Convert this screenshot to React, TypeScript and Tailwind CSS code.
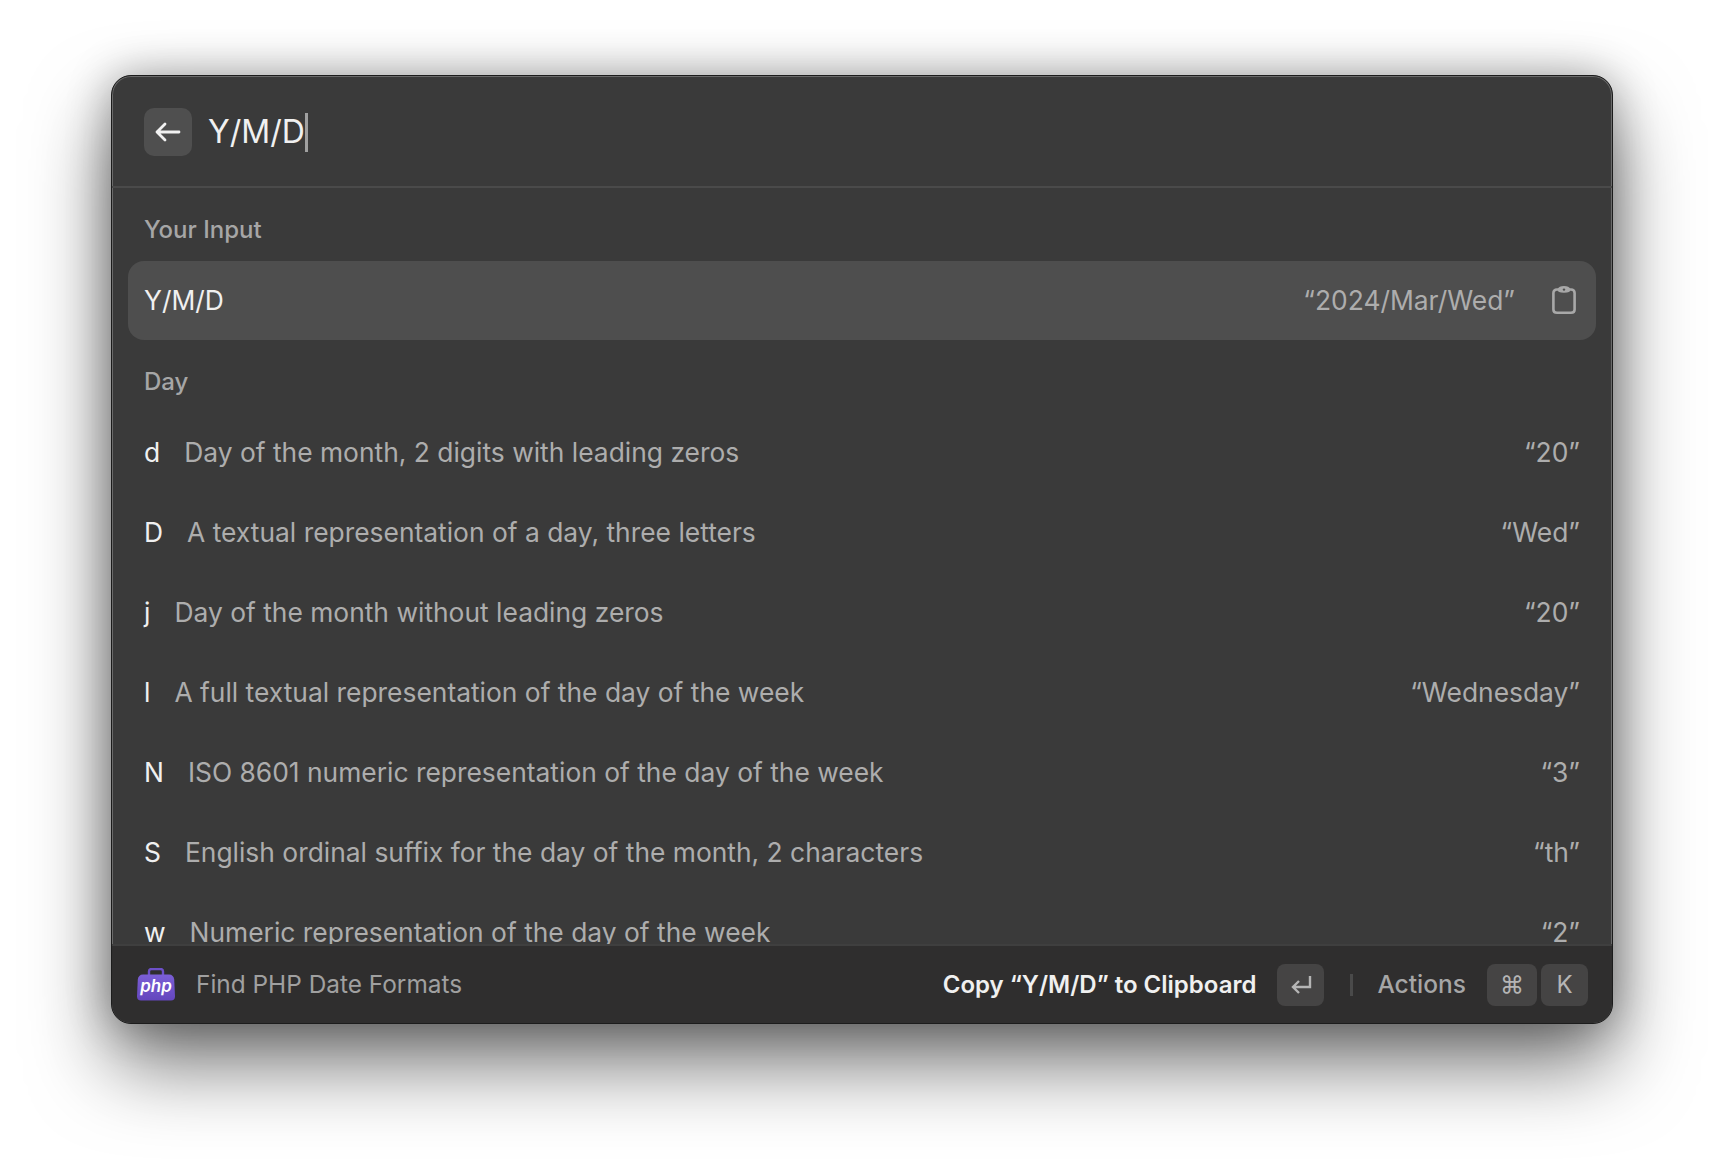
const rows = [
  { key: "d", label: "Day of the month, 2 digits with leading zeros", value: "“20”" },
  { key: "D", label: "A textual representation of a day, three letters", value: "“Wed”" },
  { key: "j", label: "Day of the month without leading zeros", value: "“20”" },
  { key: "l", label: "A full textual representation of the day of the week", value: "“Wednesday”" },
  { key: "N", label: "ISO 8601 numeric representation of the day of the week", value: "“3”" },
  { key: "S", label: "English ordinal suffix for the day of the month, 2 characters", value: "“th”" },
  { key: "w", label: "Numeric representation of the day of the week", value: "“2”" },
];

function PhpIcon() {
  return (
    <svg width="38" height="33" viewBox="0 0 38 33">
      <defs>
        <linearGradient id="php" x1="0" y1="0" x2="0" y2="1">
          <stop offset="0" stopColor="#7b5fd6" />
          <stop offset="1" stopColor="#6446bd" />
        </linearGradient>
      </defs>
      <path d="M12 7V3.500C12 2 13 1 14.500 1h9C25 1 26 2 26 3.500V7" fill="none" stroke="#6d50c8" strokeWidth="2.400" />
      <path d="M6 6.500h26c3 0 5 2 5.200 5l.8 17c0 2.500-1.500 4-4 4H4c-2.500 0-4-1.500-4-4l.8-17C1 8.500 3 6.500 6 6.500z" fill="url(#php)" />
      <text x="19" y="24" textAnchor="middle" fill="#fff" fontFamily="Inter, sans-serif" fontSize="17" fontWeight="600" fontStyle="italic">
        php
      </text>
    </svg>
  );
}

function ClipboardIcon() {
  return (
    <svg width="24" height="28" viewBox="0 0 24 28" fill="none" stroke="#a8a8a8" strokeWidth="2.600">
      <path d="M7 3.500H5C2.800 3.500 1.400 5 1.400 7v16.500c0 2 1.400 3.200 3.600 3.200h14c2.200 0 3.600-1.200 3.600-3.200V7c0-2-1.400-3.500-3.600-3.500h-2" />
      <path d="M7 3.500C7.500 2 9.500 1.300 12 1.300s4.500.7 5 2.200c.3 1-.5 2-5 2s-5.300-1-5-2z" fill="#a8a8a8" />
      <circle cx="12" cy="3.600" r="1.200" fill="#4d4d4d" stroke="none" />
    </svg>
  );
}

function Key({ children, className }: { children: React.ReactNode; className: string }) {
  return (
    <div className={`h-[42px] flex items-center justify-center rounded-lg bg-[#454444] text-[#b5b5b5] text-[24px] ${className}`}>
      {children}
    </div>
  );
}

export default function App() {
  return (
    <div className="w-[1724px] h-[1172px] bg-white pl-[111px] pt-[75px] overflow-hidden font-['Inter',sans-serif]">
      <div className="w-[1502px] h-[949px] flex flex-col rounded-[20px] overflow-hidden bg-[#3a3a3a] border border-[#1c1c1c] shadow-[0_40px_80px_rgba(0,0,0,0.55),0_0_44px_rgba(0,0,0,0.3),inset_0_0_0_1px_#6a6a6a]">
        <div className="h-[112px] shrink-0 flex items-center gap-[16px] pl-[32px] border-b-2 border-[#4a4a4a]">
          <div className="w-[48px] h-[48px] mt-[1px] rounded-[10px] bg-[#4f4f4f] flex items-center justify-center">
            <svg width="26" height="20" viewBox="0 0 26 20" fill="none" stroke="#f2f2f2" strokeWidth="2.800" strokeLinecap="round" strokeLinejoin="round">
              <path d="M24 10H2M10 2l-8 8 8 8" />
            </svg>
          </div>
          <div className="flex items-center mt-[2px]">
            <span className="text-[32px] text-[#f0f0f0] leading-none">Y/M/D</span>
            <span className="w-[3px] h-[39px] bg-[#a0a0a0]" />
          </div>
        </div>

        <div className="flex-1 min-h-0 overflow-hidden px-[16px]">
          <div className="h-[73px] flex items-center px-[16px] pt-[10px] text-[24px] font-medium text-[#a6a6a6]">Your Input</div>
          <div className="h-[79px] flex items-center justify-between pl-[16px] pr-[20px] rounded-[16px] bg-[#4e4e4e]">
            <span className="text-[26.4px] text-[#f0f0f0]">Y/M/D</span>
            <div className="flex items-center gap-[37px]">
              <span className="text-[26.4px] text-[#adadad]">“2024/Mar/Wed”</span>
              <ClipboardIcon />
            </div>
          </div>
          <div className="h-[73px] flex items-center px-[16px] pt-[10px] text-[24px] font-medium text-[#a6a6a6]">Day</div>
          {rows.map((row) => (
            <div key={row.key} className="h-[80px] shrink-0 flex items-center justify-between px-[16px] text-[26.4px]">
              <div className="flex items-center gap-[24px]">
                <span className="text-[#f0f0f0]">{row.key}</span>
                <span className="text-[#adadad]">{row.label}</span>
              </div>
              <span className="text-[#adadad]">{row.value}</span>
            </div>
          ))}
        </div>

        <div className="h-[79px] shrink-0 flex items-center justify-between pl-[25px] pr-[24px] bg-[#2f2e2e] border-t-2 border-[#3f3f3f]">
          <div className="flex items-center gap-[21px]">
            <PhpIcon />
            <span className="text-[24.4px] text-[#a0a0a0]">Find PHP Date Formats</span>
          </div>
          <div className="flex items-center">
            <span className="text-[24px] font-semibold text-[#f0f0f0]">Copy “Y/M/D” to Clipboard</span>
            <Key className="w-[47px] ml-[21px]">
              <svg width="22" height="20" viewBox="0 0 22 20" fill="none" stroke="#b5b5b5" strokeWidth="2.400">
                <path d="M20 1v11H3M9 6l-6 6 6 6" />
              </svg>
            </Key>
            <div className="w-[3px] h-[22px] ml-[26px] bg-[#4a4a4a]" />
            <span className="text-[24.5px] font-medium text-[#a6a6a6] ml-[24px]">Actions</span>
            <Key className="w-[50px] ml-[21px]">⌘</Key>
            <Key className="w-[47px] ml-[4px]">K</Key>
          </div>
        </div>
      </div>
    </div>
  );
}
